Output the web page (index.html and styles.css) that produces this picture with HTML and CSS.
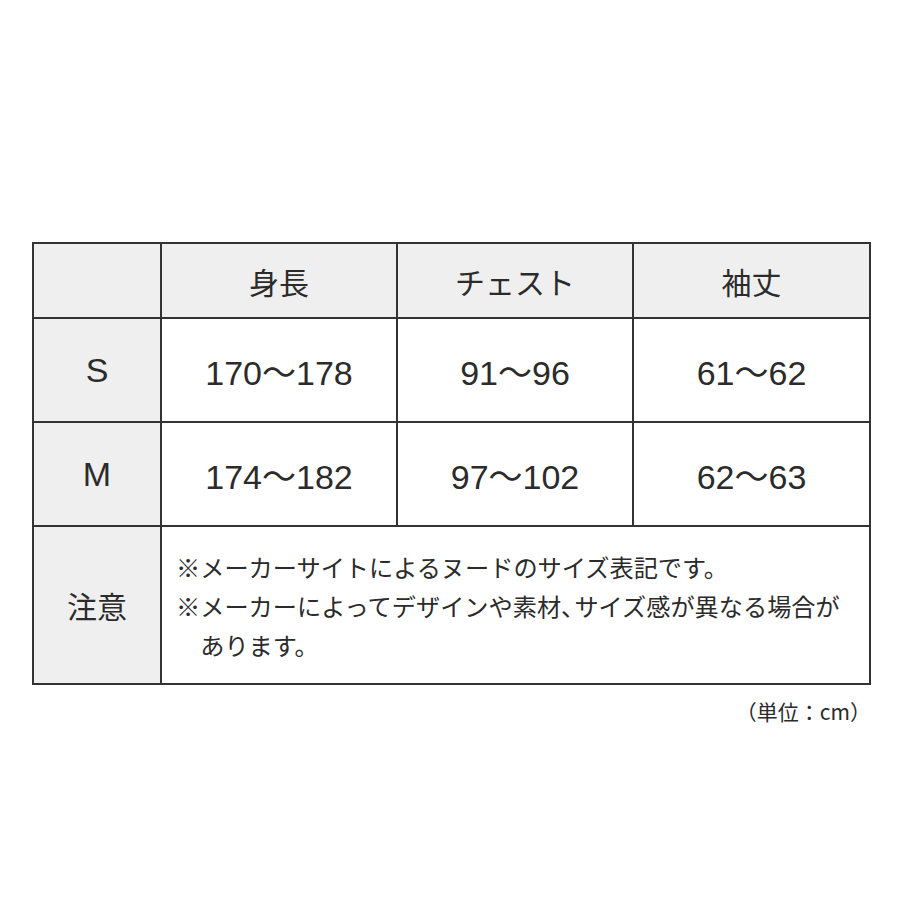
FILE: index.html
```html
<!DOCTYPE html>
<html lang="ja">
<head>
<meta charset="utf-8">
<link rel="stylesheet" href="styles.css">
</head>
<body>
<div class="wrap">
  <table class="size">
    <colgroup>
      <col class="c0"><col class="c1"><col class="c2"><col class="c3">
    </colgroup>
    <tr class="head">
      <th class="label"></th>
      <th>身長</th>
      <th>チェスト</th>
      <th>袖丈</th>
    </tr>
    <tr class="row">
      <th class="label num">S</th>
      <td class="num">170〜178</td>
      <td class="num">91〜96</td>
      <td class="num">61〜62</td>
    </tr>
    <tr class="row">
      <th class="label num">M</th>
      <td class="num">174〜182</td>
      <td class="num">97〜102</td>
      <td class="num">62〜63</td>
    </tr>
    <tr class="note-row">
      <th class="label">注意</th>
      <td class="note" colspan="3">
        <p>※メーカーサイトによるヌードのサイズ表記です。</p>
        <p>※メーカーによってデザインや素材<span class="comma">、</span>サイズ感が異なる場合が<br>あります。</p>
      </td>
    </tr>
  </table>
  <div class="unit">（単位：cm）</div>
</div>
</body>
</html>
```

FILE: styles.css
```css
html, body {
  margin: 0;
  padding: 0;
  background: #ffffff;
}
body {
  font-family: "Noto Sans CJK JP", "Liberation Sans", sans-serif;
  color: #2b2b2b;
}
.wrap {
  width: 837px;
  margin: 242px 0 0 32px;
}
.size {
  border-collapse: collapse;
  width: 837px;
  table-layout: fixed;
}
.c0 { width: 128px; }
.c1 { width: 236px; }
.c2 { width: 236px; }
.c3 { width: 237px; }
.size th,
.size td {
  border: 2px solid #333333;
  padding: 0;
  text-align: center;
  vertical-align: middle;
  font-weight: normal;
}
.head th {
  height: 73px;
  background: #efefef;
  font-size: 30px;
}
.label {
  background: #efefef;
  font-size: 30px;
}
.row th,
.row td {
  height: 102px;
}
.num {
  font-family: "Liberation Sans", "Noto Sans CJK JP", sans-serif;
  font-size: 34px;
}
.note-row th,
.note-row td {
  height: 156px;
}
.note {
  text-align: left !important;
  padding: 0 0 0 14px !important;
  font-size: 24.2px;
  line-height: 39px;
  white-space: nowrap;
}
.note p {
  margin: 0;
  padding-left: 1em;
  text-indent: -1em;
}
.comma {
  letter-spacing: -0.45em;
}
.unit {
  text-align: right;
  font-size: 21px;
  margin-top: 11px;
  margin-right: -2px;
}
```
